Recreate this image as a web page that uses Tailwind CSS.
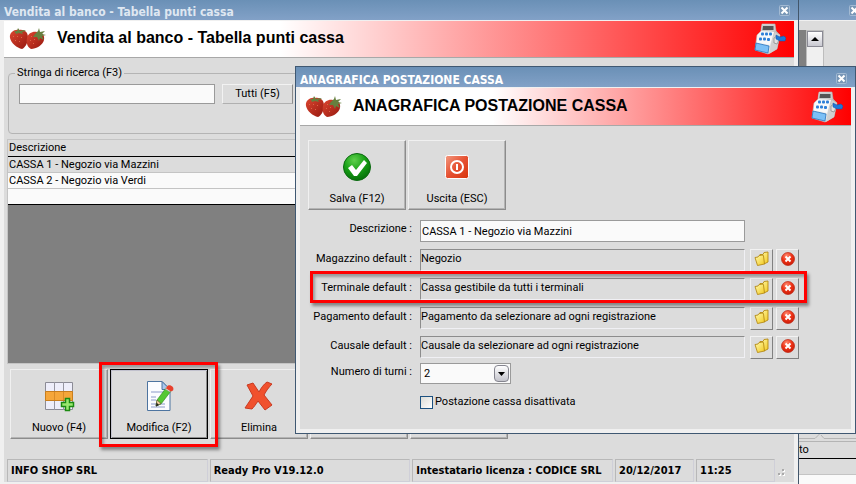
<!DOCTYPE html>
<html lang="it">
<head>
    <meta charset="UTF-8">
    <meta name="viewport" content="width=device-width, initial-scale=1.0">
    <title>Vendita al banco - Tabella punti cassa</title>
    <script src="https://cdn.jsdelivr.net/npm/@tailwindcss/browser@4"></script>
</head>
<body class="bg-[#dcdcdc] font-['Roboto',sans-serif] text-[11px] leading-4 text-black">

    <!-- Shared icons -->
    <svg class="absolute size-0" aria-hidden="true">
        <defs>
            <linearGradient id="berry" x1="0" y1="0" x2="1" y2="1">
                <stop offset="0" stop-color="#dc4630"/><stop offset="1" stop-color="#96180f"/>
            </linearGradient>
            <linearGradient id="folder" x1="0" y1="0" x2="1" y2="1">
                <stop offset="0" stop-color="#fffbb0"/><stop offset="1" stop-color="#f2c81e"/>
            </linearGradient>
            <radialGradient id="green" cx=".4" cy=".25" r=".8">
                <stop offset="0" stop-color="#5fd04c"/><stop offset=".5" stop-color="#17a016"/><stop offset="1" stop-color="#046a08"/>
            </radialGradient>
            <radialGradient id="red" cx=".4" cy=".25" r=".8">
                <stop offset="0" stop-color="#ff8a70"/><stop offset=".5" stop-color="#ee3216"/><stop offset="1" stop-color="#c81c08"/>
            </radialGradient>
            <linearGradient id="power" x1="0" y1="0" x2="1" y2="1">
                <stop offset="0" stop-color="#f39a80"/><stop offset=".5" stop-color="#e65132"/><stop offset="1" stop-color="#d8330a"/>
            </linearGradient>
            <linearGradient id="metal" x1="0" y1="0" x2="1" y2="0">
                <stop offset="0" stop-color="#ffffff"/><stop offset=".6" stop-color="#e4e4e4"/><stop offset="1" stop-color="#9a9a9a"/>
            </linearGradient>
        </defs>
        <symbol id="i-berries" viewBox="0 0 38 24">
            <path d="M1 11C0 5 6 2 10 3c5-1 9 2 9 7 0 6-3 11-6 12C8 21 2 16 1 11z" fill="url(#berry)"/>
            <path d="M18 11c1-5 6-7 10-6 5 0 8 3 7 8-1 5-8 9-13 9-4-2-5-7-4-11z" fill="url(#berry)"/>
            <path d="M5 4l3 0 1-3 2 3 4-1 2 1-4 1 1 2-4-1-3 1-1-2zM26 7l3-3 1-3 1 4 5-1-3 3 4 1-4 1 2 4-4-2-1 3-2-4-4 0z" fill="#66803f"/>
            <g fill="#dd6547"><path d="M4 9h1v1H4zM8 9h1v1H8zM6 13h1v1H6zM12 10h1v1h-1zM10 14h1v1h-1zM22 9h1v1h-1zM21 13h1v1h-1zM25 12h1v1h-1zM24 16h1v1h-1z"/></g>
        </symbol>
        <symbol id="i-register" viewBox="0 0 32 32">
            <path d="M8 1h13l1 7 4 4-3 14-9 5L1 27l2-15 4-4z" fill="url(#metal)" stroke="#b8b8b8" stroke-width=".6"/>
            <path d="M8 1.500h12.500l1 6.500H7z" fill="#c9cccc"/>
            <path d="M9 3h10.500v4H8.500z" fill="#555"/>
            <path d="M7 9h13l-4 13-13-3z" fill="#f9f9f9"/>
            <path d="M17 21l4-12 5 3-3 14-8 5z" fill="#d0d0d0"/>
            <g fill="#2c7fd8"><rect x="7" y="9.500" width="3" height="3" rx="1"/><rect x="11" y="9.500" width="3" height="3" rx="1"/><rect x="15" y="9.500" width="3" height="3" rx="1"/><rect x="5" y="14.500" width="3" height="3" rx="1"/><rect x="9" y="14.500" width="3" height="3" rx="1"/><rect x="13" y="15" width="3" height="3" rx="1"/></g>
            <path d="M2 20l13 3-1 7L1 27z" fill="#7cc0f6" stroke="#2873bd" stroke-width=".8"/>
            <path d="M20 15l3-2 2 4-2 4-3-1z" fill="#e2e2e2" stroke="#777" stroke-width=".6"/>
            <path d="M22 12l4 2 4-1 2 2-1 3-5 0-4-2z" fill="#1f78d8" stroke="#0c56a8" stroke-width=".5"/>
        </symbol>
        <symbol id="i-close" viewBox="0 0 11 11">
            <rect x=".5" y=".5" width="10" height="10" rx="1" fill="#7796b6" stroke="#a3bad3"/>
            <path d="M2.500 2.500l6 6M8.500 2.500l-6 6" stroke="#fff" stroke-width="2"/>
        </symbol>
        <symbol id="i-folder" viewBox="0 0 16 16">
            <path d="M6 3.500h3l1-2 4-.5v10l-4 2z" fill="url(#folder)" stroke="#b58a14" stroke-width=".9"/>
            <path d="M1 6.500l3-.5 1-1.500 4-.5.500 1 1 8-7 1.500z" fill="url(#folder)" stroke="#b58a14" stroke-width=".9" stroke-linejoin="round"/>
        </symbol>
        <symbol id="i-cancel" viewBox="0 0 14 14">
            <circle cx="7" cy="7" r="6.500" fill="url(#red)" stroke="#bd2410" stroke-width=".7"/>
            <path d="M4.500 4.500l5 5M9.500 4.500l-5 5" stroke="#fff" stroke-width="2"/>
        </symbol>
    </svg>

    <main class="relative h-screen min-h-[484px] overflow-hidden">

        <!-- Window behind -->
        <div class="flex h-full flex-col items-end">
            <div class="flex h-[21px] w-full shrink-0 items-center justify-end border-b border-[#f0f0f0] bg-linear-to-b from-[#6a90b6] to-[#82a1c7]">
                <button class="-mr-1 size-[11px]" aria-label="Chiudi"><svg class="size-[11px]"><use href="#i-close"/></svg></button>
            </div>
            <div class="mt-[9px] mr-8 flex h-[401px] w-[26px] bg-[#808080] pl-2">
                <div class="w-[18px] border border-[#bdbdbd] bg-[#f0f0f0]">
                    <button class="flex size-4 items-center justify-center border border-[#8a8a94] bg-linear-to-b from-white to-[#c9c9d1]" aria-label="Scorri su">
                        <svg class="h-1 w-2" viewBox="0 0 8 4"><path d="M4 0l4 4H0z"/></svg>
                    </button>
                </div>
            </div>
            <div class="flex w-[57px] grow flex-col">
                <svg class="h-[11px] w-full shrink-0" viewBox="0 0 57 11"><path d="M0 7.500h16l3-3 2-2M22 4l3 3.500h32M0 10.500h57" fill="none" stroke="#b4b4b4"/></svg>
                <div class="h-[17px] border-b border-black">to</div>
                <div class="h-4 border-b border-[#c4c4c4]"></div>
                <div class="grow bg-[#fafafa]"></div>
            </div>
        </div>

        <!-- Main window -->
        <section class="absolute inset-y-0 right-[57px] left-0 flex flex-col border-r border-[#42566b] bg-[#dcdcdc]">
            <div class="flex h-5 shrink-0 items-center justify-between bg-linear-to-b from-[#6a90b6] to-[#82a1c7] pr-2 pl-1">
                <span class="pt-1 font-['DejaVu_Sans_Condensed','DejaVu_Sans',sans-serif] text-[12px] font-bold text-[#dfe7f1]">Vendita al banco - Tabella punti cassa</span>
                <button class="size-[11px]" aria-label="Chiudi"><svg class="size-[11px]"><use href="#i-close"/></svg></button>
            </div>
            <div class="flex grow flex-col border-x-4 border-t border-b-2 border-[#f0f0f0]">
                <header class="flex h-[37px] items-center justify-between border-b border-[#a8a8a8] bg-linear-to-r/srgb from-white from-35% to-[#ff0000] pr-2 pl-[5px]">
                    <svg class="h-6 w-[38px] shrink-0"><use href="#i-berries"/></svg>
                    <h1 class="grow pb-[2px] pl-[10px] font-['Liberation_Sans',Arial,sans-serif] text-[16px] font-bold">Vendita al banco - Tabella punti cassa</h1>
                    <svg class="size-8"><use href="#i-register"/></svg>
                </header>

                <div class="flex grow flex-col px-[3px]">
                    <fieldset class="mx-[1px] mt-[7px] flex h-[69px] items-start gap-[7px] rounded border border-[#b4b4b4] px-[10px] pt-[3px]">
                        <legend class="-ml-1 px-[2px]"><label for="ricerca">Stringa di ricerca (F3)</label></legend>
                        <input id="ricerca" type="text" class="h-5 w-[196px] border border-[#9a9a9a] bg-[#fafafa] px-1">
                        <button class="h-5 w-[71px] border border-t-[#f2f2f2] border-r-[#8c8c8c] border-b-[#b0b0b0] border-l-[#f2f2f2]">Tutti (F5)</button>
                    </fieldset>

                    <div class="mt-[5px] grow border border-[#c4c4c4] bg-[#808080]">
                        <table class="w-full border-collapse bg-[#fafafa] text-left">
                            <thead>
                                <tr class="h-4 border-b border-black bg-[#dcdcdc]"><th class="px-px py-0 font-normal">Descrizione</th></tr>
                            </thead>
                            <tbody>
                                <tr class="h-4 border-b border-[#c4c4c4] bg-[#dcdcdc]"><td class="px-px py-0 leading-[15px]">CASSA 1 - Negozio via Mazzini</td></tr>
                                <tr class="h-4 border-b border-[#c4c4c4]"><td class="px-px py-0 leading-[15px]">CASSA 2 - Negozio via Verdi</td></tr>
                                <tr class="h-4 border-b border-black"><td class="p-0"></td></tr>
                            </tbody>
                        </table>
                    </div>

                    <div class="mt-[5px] ml-[3px] flex gap-[2px]">
                        <button class="flex h-[70px] w-[98px] flex-col items-center justify-end border border-t-[#f0f0f0] border-r-[#8c8c8c] border-b-[#8c8c8c] border-l-[#f0f0f0] pb-[2px] shadow-[inset_-1px_-1px_0_#b4b4b4]">
                            <svg class="mb-2 size-8" viewBox="0 0 32 32">
                                <path d="M2.500 2.500h27v27h-27z" fill="#eeeefa" stroke="#8b8b95"/>
                                <path d="M2.500 11.500h27v9h-27z" fill="#f5a63a" stroke="#c97e1c"/>
                                <path d="M11.500 2v9M20.500 2v9M11.500 21v9M20.500 21v9" stroke="#9696a0"/>
                                <path d="M11.500 12v8M20.500 12v8" stroke="#d98b28"/>
                                <path d="M22.500 18.500h4v4h4v4h-4v4h-4v-4h-4v-4h4z" fill="#9be870" stroke="#1c8a12" stroke-width="1.500"/>
                            </svg>
                            Nuovo (F4)
                        </button>
                        <div class="relative">
                            <button class="flex h-[70px] w-[98px] flex-col items-center justify-end border border-black pb-[2px] shadow-[inset_1px_1px_0_#c4c4d0,inset_-1px_-1px_0_#8c8c8c]">
                                <svg class="mb-2 size-8" viewBox="0 0 32 32">
                                    <path d="M4.500 1.500H19l8 8v21H4.500z" fill="#fbfcff" stroke="#4d74a0"/>
                                    <path d="M19 1.500V9.500h8z" fill="#a9c8ee" stroke="#4d74a0"/>
                                    <path d="M8 12h14M8 17h5M8 20h5M8 24h14M8 27h14" stroke="#c3cbe4" stroke-width="2"/>
                                    <path d="M13 26l1-6L23 8l5 3-10 13z" fill="#55c832" stroke="#2a851a" stroke-width=".6"/>
                                    <path d="M13 26l1-6 4 3.500z" fill="#efcf9c" stroke="#5b4a2a" stroke-width=".6"/><path d="M13 26.500l.5-4 2.500 2.500z" fill="#222"/>
                                    <path d="M22 9l2-3 5 3-2 3z" fill="#e8e8e8" stroke="#888" stroke-width=".5"/>
                                    <path d="M24 6.500c2-3 8 0 6 4l-2 1-5-3z" fill="#e8402c"/>
                                </svg>
                                Modifica (F2)
                            </button>
                            <div class="pointer-events-none absolute -top-[7px] -right-[10px] -bottom-2 -left-[11px] border-[3px] border-[#ff0000] shadow-[2px_3px_3px_rgba(0,0,0,0.4),inset_2px_3px_3px_rgba(0,0,0,0.3)]"></div>
                        </div>
                        <button class="flex h-[70px] w-[98px] flex-col items-center justify-end border border-t-[#f0f0f0] border-r-[#8c8c8c] border-b-[#8c8c8c] border-l-[#f0f0f0] pb-[2px] shadow-[inset_-1px_-1px_0_#b4b4b4]">
                            <svg class="mb-2 size-8" viewBox="0 0 32 32">
                                <path d="M4 5l6-2 6 9c2-4 5-8 8-10l5 2c-3 3-6 7-8 11l8 10-7 5-7-9c-2 3-4 6-6 8l-7-1c3-4 5-8 8-12z" fill="#f0512e" stroke="#c83a22" stroke-linejoin="round"/>
                            </svg>
                            Elimina
                        </button>
                        <button class="h-[70px] w-[98px] border border-t-[#f0f0f0] border-r-[#8c8c8c] border-b-[#8c8c8c] border-l-[#f0f0f0] shadow-[inset_-1px_-1px_0_#b4b4b4]" aria-label="Stampa"></button>
                        <button class="h-[70px] w-[98px] border border-t-[#f0f0f0] border-r-[#8c8c8c] border-b-[#8c8c8c] border-l-[#f0f0f0] shadow-[inset_-1px_-1px_0_#b4b4b4]" aria-label="Uscita"></button>
                    </div>

                    <footer class="mt-5 flex h-[23px] gap-[2px] font-['DejaVu_Sans_Condensed','DejaVu_Sans',sans-serif] font-bold leading-[22px]">
                        <div class="flex-1 border border-t-[#b8b8b8] border-r-[#cfcfd8] border-b-[#cfcfd8] border-l-[#b8b8b8] px-[3px]">INFO SHOP SRL</div>
                        <div class="flex-1 border border-t-[#b8b8b8] border-r-[#cfcfd8] border-b-[#cfcfd8] border-l-[#b8b8b8] px-[3px]">Ready Pro V19.12.0</div>
                        <div class="flex-1 border border-t-[#b8b8b8] border-r-[#cfcfd8] border-b-[#cfcfd8] border-l-[#b8b8b8] px-[3px] whitespace-nowrap">Intestatario licenza : CODICE SRL</div>
                        <div class="w-[79px] border border-t-[#b8b8b8] border-r-[#cfcfd8] border-b-[#cfcfd8] border-l-[#b8b8b8] px-[3px]">20/12/2017</div>
                        <div class="w-[79px] border border-t-[#b8b8b8] border-r-[#cfcfd8] border-b-[#cfcfd8] border-l-[#b8b8b8] px-[3px]">11:25</div>
                        <svg class="mt-2 mr-[3px] size-[11px]" viewBox="0 0 11 11"><path d="M2 7h2v2H2zM6 7h2v2H6zM6 3h2v2H6z" fill="#fff"/><path d="M1 6h2v2H1zM5 6h2v2H5zM5 2h2v2H5z" fill="#aaa"/></svg>
                    </footer>
                </div>
            </div>
        </section>

        <!-- Dialog -->
        <section class="absolute top-[66px] right-0 left-[295px] border border-[#3f5872] bg-[#dcdcdc]" role="dialog" aria-labelledby="dlg-title">
            <div class="flex h-5 items-center justify-between bg-linear-to-b from-[#6a90b6] to-[#82a1c7] pr-2 pl-1">
                <span class="pt-[5px] font-['DejaVu_Sans_Condensed','DejaVu_Sans',sans-serif] text-[12px] font-bold text-white">ANAGRAFICA POSTAZIONE CASSA</span>
                <button class="mt-[3px] size-[11px]" aria-label="Chiudi"><svg class="size-[11px]"><use href="#i-close"/></svg></button>
            </div>
            <div class="border-x-4 border-t border-b-4 border-[#f0f0f0]">
                <header class="flex h-[38px] items-center justify-between border-b border-[#a8a8a8] bg-linear-to-r/srgb from-white from-35% to-[#ff0000] pr-2 pl-[5px]">
                    <svg class="h-6 w-[38px] shrink-0"><use href="#i-berries"/></svg>
                    <h2 id="dlg-title" class="grow pb-[2px] pl-[10px] font-['Liberation_Sans',Arial,sans-serif] text-[16px] font-bold">ANAGRAFICA POSTAZIONE CASSA</h2>
                    <svg class="size-8"><use href="#i-register"/></svg>
                </header>

                <div class="mt-[14px] ml-2 flex gap-[2px]">
                    <button class="flex h-[70px] w-[98px] flex-col items-center justify-end border border-t-[#f0f0f0] border-r-[#8c8c8c] border-b-[#8c8c8c] border-l-[#f0f0f0] pb-[2px] shadow-[inset_-1px_-1px_0_#b4b4b4]">
                        <svg class="mb-2 size-8" viewBox="0 0 32 32">
                            <circle cx="16" cy="16" r="13.500" fill="url(#green)" stroke="#0b6a10"/>
                            <path d="M7 17l4-3 4 5 8-10 3 3-10 13h-3z" fill="#fff"/>
                        </svg>
                        Salva (F12)
                    </button>
                    <button class="flex h-[70px] w-[98px] flex-col items-center justify-end border border-t-[#f0f0f0] border-r-[#8c8c8c] border-b-[#8c8c8c] border-l-[#f0f0f0] pb-[2px] shadow-[inset_-1px_-1px_0_#b4b4b4]">
                        <svg class="mb-2 size-8" viewBox="0 0 32 32">
                            <rect x="4.500" y="4.500" width="23" height="23" rx="2" fill="url(#power)" stroke="#fff"/>
                            <circle cx="16" cy="16" r="6" fill="none" stroke="#fff" stroke-width="2"/>
                            <path d="M16 13v6" stroke="#fff" stroke-width="2"/>
                        </svg>
                        Uscita (ESC)
                    </button>
                </div>

                <form class="mt-[10px] pb-[17px] pl-[10px]">
                    <div class="flex flex-col gap-[7px]">
                        <div class="flex h-[22px] items-start">
                            <label for="descrizione" class="mr-2 w-[102px] pt-px text-right whitespace-nowrap">Descrizione :</label>
                            <input id="descrizione" type="text" value="CASSA 1 - Negozio via Mazzini" class="h-[22px] w-[325px] border border-[#9a9a9a] bg-[#fafafa] px-px">
                        </div>
                        <div class="flex h-[22px] items-start">
                            <label for="magazzino" class="mr-2 w-[102px] pt-[2px] text-right whitespace-nowrap">Magazzino default :</label>
                            <input id="magazzino" type="text" readonly value="Negozio" class="h-[22px] w-[325px] border border-t-[#8c8c8c] border-r-[#f0f0f4] border-b-[#f0f0f4] border-l-[#8c8c8c] pb-[3px]">
                            <button type="button" class="ml-[5px] flex size-[23px] justify-center border border-t-[#f2f2f2] border-r-[#808080] border-b-[#808080] border-l-[#f2f2f2] pt-px" aria-label="Apri"><svg class="size-4"><use href="#i-folder"/></svg></button>
                            <button type="button" class="ml-[3px] flex size-[23px] justify-center border border-t-[#f2f2f2] border-r-[#808080] border-b-[#808080] border-l-[#f2f2f2] pt-[2px]" aria-label="Azzera"><svg class="size-[14px]"><use href="#i-cancel"/></svg></button>
                        </div>
                        <div class="relative flex h-[22px] items-start">
                            <label for="terminale" class="mr-2 w-[102px] pt-[2px] text-right whitespace-nowrap">Terminale default :</label>
                            <input id="terminale" type="text" readonly value="Cassa gestibile da tutti i terminali" class="h-[22px] w-[325px] border border-t-[#8c8c8c] border-r-[#f0f0f4] border-b-[#f0f0f4] border-l-[#8c8c8c] pb-[3px]">
                            <button type="button" class="ml-[5px] flex size-[23px] justify-center border border-t-[#f2f2f2] border-r-[#808080] border-b-[#808080] border-l-[#f2f2f2] pt-px" aria-label="Apri"><svg class="size-4"><use href="#i-folder"/></svg></button>
                            <button type="button" class="ml-[3px] flex size-[23px] justify-center border border-t-[#f2f2f2] border-r-[#808080] border-b-[#808080] border-l-[#f2f2f2] pt-[2px]" aria-label="Azzera"><svg class="size-[14px]"><use href="#i-cancel"/></svg></button>
                            <div class="pointer-events-none absolute -top-[7px] -bottom-[3px] left-0 w-[497px] border-[3px] border-[#ff0000] shadow-[2px_3px_3px_rgba(0,0,0,0.4),inset_2px_3px_3px_rgba(0,0,0,0.3)]"></div>
                        </div>
                        <div class="flex h-[22px] items-start">
                            <label for="pagamento" class="mr-2 w-[102px] pt-[2px] text-right whitespace-nowrap">Pagamento default :</label>
                            <input id="pagamento" type="text" readonly value="Pagamento da selezionare ad ogni registrazione" class="h-[22px] w-[325px] border border-t-[#8c8c8c] border-r-[#f0f0f4] border-b-[#f0f0f4] border-l-[#8c8c8c] pb-[3px]">
                            <button type="button" class="ml-[5px] flex size-[23px] justify-center border border-t-[#f2f2f2] border-r-[#808080] border-b-[#808080] border-l-[#f2f2f2] pt-px" aria-label="Apri"><svg class="size-4"><use href="#i-folder"/></svg></button>
                            <button type="button" class="ml-[3px] flex size-[23px] justify-center border border-t-[#f2f2f2] border-r-[#808080] border-b-[#808080] border-l-[#f2f2f2] pt-[2px]" aria-label="Azzera"><svg class="size-[14px]"><use href="#i-cancel"/></svg></button>
                        </div>
                        <div class="flex h-[22px] items-start">
                            <label for="causale" class="mr-2 w-[102px] pt-[2px] text-right whitespace-nowrap">Causale default :</label>
                            <input id="causale" type="text" readonly value="Causale da selezionare ad ogni registrazione" class="h-[22px] w-[325px] border border-t-[#8c8c8c] border-r-[#f0f0f4] border-b-[#f0f0f4] border-l-[#8c8c8c] pb-[3px]">
                            <button type="button" class="ml-[5px] flex size-[23px] justify-center border border-t-[#f2f2f2] border-r-[#808080] border-b-[#808080] border-l-[#f2f2f2] pt-px" aria-label="Apri"><svg class="size-4"><use href="#i-folder"/></svg></button>
                            <button type="button" class="ml-[3px] flex size-[23px] justify-center border border-t-[#f2f2f2] border-r-[#808080] border-b-[#808080] border-l-[#f2f2f2] pt-[2px]" aria-label="Azzera"><svg class="size-[14px]"><use href="#i-cancel"/></svg></button>
                        </div>
                    </div>
                    <div class="mt-[5px] flex h-[22px] items-start">
                        <label for="turni" class="mr-2 w-[102px] pt-px text-right whitespace-nowrap">Numero di turni :</label>
                        <div class="relative">
                            <select id="turni" class="h-[21px] w-[91px] appearance-none border border-[#9a9a9a] bg-[#fafafa] px-[3px]">
                                <option>1</option>
                                <option selected>2</option>
                                <option>3</option>
                            </select>
                            <span class="pointer-events-none absolute top-[2px] right-[2px] flex h-[17px] w-[15px] items-center justify-center rounded-sm border border-[#85858f] bg-linear-to-b from-white to-[#c4c4cc]">
                                <svg class="h-1 w-[7px]" viewBox="0 0 7 4"><path d="M0 0h7L3.500 4z"/></svg>
                            </span>
                        </div>
                    </div>
                    <label class="mt-[7px] ml-[110px] flex h-5 items-center gap-[2px]">
                        <input type="checkbox" class="size-[13px] appearance-none border border-[#1c5180] bg-linear-to-br from-[#dcdcd7] to-white checked:bg-[#1c5180]">
                        Postazione cassa disattivata
                    </label>
                </form>
            </div>
        </section>
    </main>
</body>
</html>
